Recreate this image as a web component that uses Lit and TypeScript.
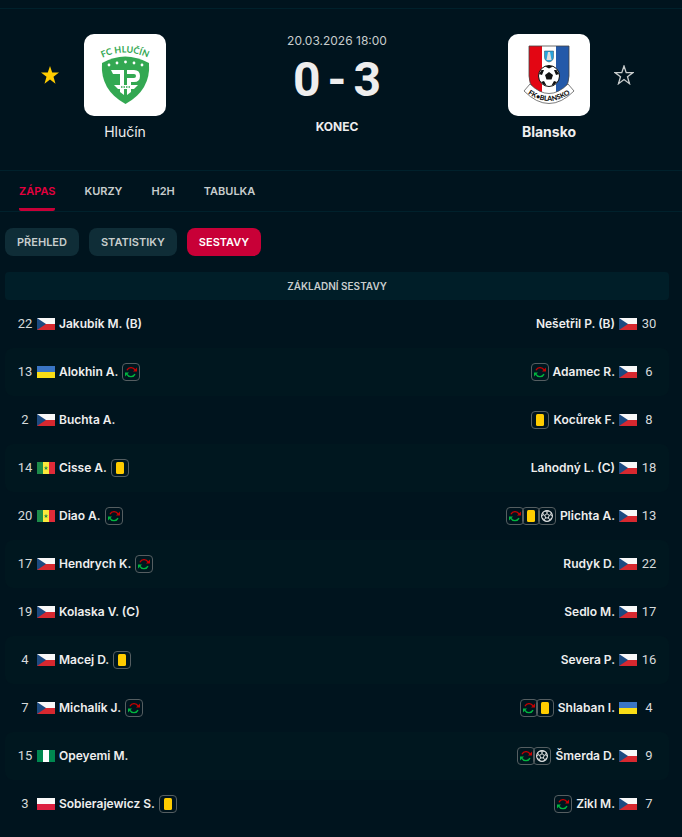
import { LitElement, html, svg, css, nothing } from "lit";
import { customElement, property } from "lit/decorators.js";

type Country = "cz" | "ua" | "sn" | "ng" | "pl";
type Incident = "sub" | "card" | "goal";
interface Player {
  no: number;
  name: string;
  country: Country;
  incidents?: Incident[];
}

const p = (no: number, name: string, country: Country, incidents: Incident[] = []): Player => ({ no, name, country, incidents });

const ROWS: [Player, Player][] = [
  [p(22, "Jakubík M. (B)", "cz"), p(30, "Nešetřil P. (B)", "cz")],
  [p(13, "Alokhin A.", "ua", ["sub"]), p(6, "Adamec R.", "cz", ["sub"])],
  [p(2, "Buchta A.", "cz"), p(8, "Kocůrek F.", "cz", ["card"])],
  [p(14, "Cisse A.", "sn", ["card"]), p(18, "Lahodný L. (C)", "cz")],
  [p(20, "Diao A.", "sn", ["sub"]), p(13, "Plichta A.", "cz", ["sub", "card", "goal"])],
  [p(17, "Hendrych K.", "cz", ["sub"]), p(22, "Rudyk D.", "cz")],
  [p(19, "Kolaska V. (C)", "cz"), p(17, "Sedlo M.", "cz")],
  [p(4, "Macej D.", "cz", ["card"]), p(16, "Severa P.", "cz")],
  [p(7, "Michalík J.", "cz", ["sub"]), p(4, "Shlaban I.", "ua", ["sub", "card"])],
  [p(15, "Opeyemi M.", "ng"), p(9, "Šmerda D.", "cz", ["sub", "goal"])],
  [p(3, "Sobierajewicz S.", "pl", ["card"]), p(7, "Zikl M.", "cz", ["sub"])],
];

const FLAGS = {
  cz: svg`<rect width="18" height="6" fill="#f8f8f8"/><rect y="6" width="18" height="6" fill="#d7282f"/><path d="M0 0L9 6L0 12Z" fill="#1c4a80"/>`,
  ua: svg`<rect width="18" height="6" fill="#3a75c4"/><rect y="6" width="18" height="6" fill="#f9dd16"/>`,
  sn: svg`<rect width="6" height="12" fill="#1e8c4a"/><rect x="6" width="6" height="12" fill="#fbea3c"/><rect x="12" width="6" height="12" fill="#e02b38"/><path d="M9 3.8l.6 1.6h1.6l-1.3 1 .5 1.6L9 7.1l-1.4.9.5-1.6-1.3-1h1.6z" fill="#1e8c4a"/>`,
  ng: svg`<rect width="18" height="12" fill="#008850"/><rect x="6" width="6" height="12" fill="#fff"/>`,
  pl: svg`<rect width="18" height="6" fill="#fafafa"/><rect y="6" width="18" height="6" fill="#dc1f40"/>`,
};

const STAR = "M10 1l2.200 6.600H19l-5.500 4.200 2 6.900L10 14.600l-5.500 4.100 2-6.900L1 7.600h6.800z";

const INCIDENTS = {
  sub: svg`<g fill="none" stroke-width="1.4">
      <path d="M2 4.200A4.500 4.500 0 0 1 10 3.900" stroke="#c80000"/>
      <path d="M10 8.100A4.500 4.500 0 0 1 2 8.300" stroke="#00b53f"/></g>
      <path d="M12 1.500V5.500H8z" fill="#c80000"/><path d="M0 10.500V6.500h4z" fill="#00b53f"/>`,
  card: svg`<rect x="2" width="8" height="12" rx="1.500" fill="#ffcd00"/>`,
  goal: svg`<circle cx="6" cy="6" r="5.400" fill="none" stroke="#e8eaea" stroke-width="1.100"/>
      <path d="M6 3.700L8.200 5.300 7.400 7.900H4.600L3.800 5.300Z" fill="none" stroke="#e8eaea"/>
      <path d="M6 3.700V2M8.200 5.300L10 4.700M7.400 7.900L8.600 9.600M4.600 7.900L3.400 9.600M3.800 5.300L2 4.700" stroke="#e8eaea"/>
      <path d="M4 .9L6 2 8 .9M11.300 6.200L10 4.700 10.100 2.600M10.700 8.500L8.600 9.600 7.600 11.300M1.300 8.500L3.400 9.600 4.400 11.300M.7 6.200L2 4.700 1.900 2.600" fill="none" stroke="#e8eaea" stroke-width=".9"/>`,
};

@customElement("player-cell")
class PlayerCell extends LitElement {
  @property({ attribute: false }) player!: Player;
  @property({ type: Boolean, reflect: true }) away = false;

  static styles = css`
    :host { display: flex; align-items: center; min-width: 0; height: 48px; font-size: 12px; line-height: 16px; color: #eeeeee; }
    :host([away]) { flex-direction: row-reverse; }
    .no { width: 24px; text-align: center; font: 400 13px/16px Roboto, sans-serif; color: #d6dadb; }
    .flag { width: 18px; height: 12px; margin-inline-end: 4px; flex: none; display: block; }
    :host([away]) .flag { margin-inline: 4px 0; }
    .name { font-weight: 600; white-space: nowrap; }
    .incidents { display: flex; margin: 0 4px; }
    .incident { box-sizing: border-box; width: 18px; height: 18px; border: 1px solid #555e61; border-radius: 4px; padding: 2px; }
    .incident + .incident { margin-left: -2px; }
    .incident svg { display: block; width: 12px; height: 12px; }
  `;

  render() {
    const { no, name, country, incidents } = this.player;
    return html`
      <span class="no">${no}</span>
      <svg class="flag" viewBox="0 0 18 12" aria-hidden="true">${FLAGS[country]}</svg>
      <span class="name">${name}</span>
      ${incidents?.length
        ? html`<span class="incidents">${incidents.map(
            (i) => html`<span class="incident"><svg viewBox="0 0 12 12" aria-hidden="true">${INCIDENTS[i]}</svg></span>`
          )}</span>`
        : nothing}
    `;
  }
}

@customElement("app-root")
class AppRoot extends LitElement {
  static styles = css`
    :host { display: block; min-height: 100vh; background: #00141e; font-family: Inter, "Noto Sans", sans-serif; color: #eeeeee; }
    * { box-sizing: border-box; }
    .page { padding-top: 8px; }
    .header { display: grid; grid-template-columns: 1fr 294px 1fr; border-top: 1px solid #00212c; height: 162px; padding: 25px 8px 0 0; }
    .side { display: flex; justify-content: flex-end; align-items: flex-start; }
    .side.away { flex-direction: row-reverse; }
    .fav { border: 0; padding: 0; background: none; width: 20px; height: 20px; margin-top: 31px; }
    .fav svg { display: block; width: 20px; height: 20px; }
    .team { display: flex; flex-direction: column; align-items: center; width: 130px; color: #eeeeee; text-decoration: none; gap: 6px; }
    .logo { display: block; width: 82px; height: 82px; border-radius: 10px; background: #fff; }
    .team-name { font-size: 14px; line-height: 20px; }
    .home .team-name { font-weight: 400; }
    .away .team-name { font-weight: 700; }
    .info { display: flex; flex-direction: column; align-items: center; }
    .date { font-size: 12px; line-height: 14px; color: #c8cdcd; }
    .score { display: flex; align-items: center; gap: 7px; font: 700 48px/64px Roboto, sans-serif; }
    .state { font-size: 12px; line-height: 16px; font-weight: 700; margin-top: 7px; }
    .tabs { display: flex; gap: 29px; height: 42px; padding: 0 19px; border: 1px solid #00212c; border-width: 1px 0; }
    .tab { font-size: 11px; line-height: 40px; font-weight: 600; color: #c8cdcd; text-decoration: none; }
    .tab.active { color: #e4003f; border-bottom: 3px solid #c80037; border-radius: 2px; }
    .pills { display: flex; gap: 10px; padding: 16px 5px; }
    .pill { height: 28px; border: 0; border-radius: 8px; padding: 0 12px; background: #0f2d37; color: #c8cdcd; font: 600 11px/28px Inter, sans-serif; }
    .pill.active { background: #c80037; color: #fff; }
    .lineups { padding: 0 13px 0 5px; }
    .title { margin: 0; height: 28px; border-radius: 4px; background: #001e28; color: #c8cdcd; text-align: center; font-size: 10px; line-height: 28px; font-weight: 600; }
    .row { display: grid; grid-template-columns: 1fr 1fr; padding: 0 8px; border-radius: 8px; }
    .row:nth-child(odd) { background: #00171f; }
  `;

  star(filled: boolean) {
    return html`<svg viewBox="0 0 20 20" aria-hidden="true"><path d=${STAR} fill=${filled ? "#ffcd00" : "none"} stroke=${filled ? "none" : "#c8cdcd"} stroke-width="1.3"/></svg>`;
  }

  hlucin() {
    return html`<svg class="logo" viewBox="0 0 82 82" role="img" aria-label="Hlučín">
      <defs><path id="arc-h" d="M16 25Q41 12 66 25"/></defs>
      <text font-family="Lato, sans-serif" font-weight="700" font-size="9" fill="#33a852" text-anchor="middle"><textPath href="#arc-h" startOffset="50%">FC HLUČÍN</textPath></text>
      <path d="M18 29Q41 16 65 29Q67 56 41.500 70Q16 56 18 29Z" fill="#33a852"/>
      <g fill="#fff"><circle cx="25" cy="31" r="1.400"/><circle cx="33" cy="29" r="1.400"/><circle cx="41.500" cy="28" r="1.400"/><circle cx="50" cy="29" r="1.400"/><circle cx="58" cy="31" r="1.400"/>
      <path d="M27 36H40V61L36 58V40H29ZM43 36H50Q56 36 56 42T50 48H47V58L43 61V44H50Q52 44 52 42T50 40H43Z"/>
      <path d="M30 51H54L50 55H34Z"/></g>
      <path d="M37 53h9" stroke="#33a852" stroke-width="1.500" stroke-dasharray="1.500 1"/>
    </svg>`;
  }

  blansko() {
    return html`<svg class="logo" viewBox="0 0 82 82" role="img" aria-label="Blansko">
      <defs><clipPath id="shield"><path d="M21 12H61V42Q61 58 41 63Q21 58 21 42Z"/></clipPath><path id="arc-b" d="M15 56Q41 78 67 56"/></defs>
      <g clip-path="url(#shield)"><path d="M21 12H34V65H21Z" fill="#e30613"/><path d="M34 12H48V65H34Z" fill="#fff"/><path d="M48 12H61V65H48Z" fill="#2459a9"/></g>
      <path d="M21 12H61V42Q61 58 41 63Q21 58 21 42Z" fill="none" stroke="#444" stroke-width=".8"/>
      <path d="M36.500 17H45.500V23Q45.500 27 41 28Q36.500 27 36.500 23Z" fill="#29a3dc" stroke="#345" stroke-width=".5"/><path d="M40 18H42L43.500 26H38.500Z" fill="#ddd"/>
      <path d="M22 50Q41 69 60 50L66 57Q41 82 16 57Z" fill="#fff" stroke="#444" stroke-width=".7"/>
      <circle cx="41" cy="42" r="10.500" fill="#fff" stroke="#111" stroke-width="1"/>
      <path d="M41 38L45 41 43.500 45.500H38.500L37 41ZM37 32.500L41 34.500 45 32.500Q41 31 37 32.500ZM31 40L33.500 36 36 36 34 41ZM51 40L48.500 36 46 36 48 41ZM33 48L36 47 38.500 51.500 35.500 50.500ZM49 48L46 47 43.500 51.500 46.500 50.500Z" fill="#111"/>
      <text font-family="Lato, sans-serif" font-weight="900" font-size="7" fill="#111" text-anchor="middle"><textPath href="#arc-b" startOffset="50%">FK•BLANSKO</textPath></text>
    </svg>`;
  }

  render() {
    return html`<main class="page">
      <header class="header">
        <div class="side home">
          <button class="fav" aria-label="Hlučín">${this.star(true)}</button>
          <a class="team" href="#hlucin">${this.hlucin()}<span class="team-name">Hlučín</span></a>
        </div>
        <div class="info">
          <div class="date">20.03.2026 18:00</div>
          <div class="score"><span>0</span><span>-</span><span>3</span></div>
          <div class="state">KONEC</div>
        </div>
        <div class="side away">
          <button class="fav" aria-label="Blansko">${this.star(false)}</button>
          <a class="team" href="#blansko">${this.blansko()}<span class="team-name">Blansko</span></a>
        </div>
      </header>
      <nav class="tabs">
        ${["ZÁPAS", "KURZY", "H2H", "TABULKA"].map((t, i) => html`<a class="tab ${i === 0 ? "active" : ""}" href="#${t}">${t}</a>`)}
      </nav>
      <div class="pills">
        ${["PŘEHLED", "STATISTIKY", "SESTAVY"].map((t, i) => html`<button class="pill ${i === 2 ? "active" : ""}">${t}</button>`)}
      </div>
      <section class="lineups">
        <h2 class="title">ZÁKLADNÍ SESTAVY</h2>
        ${ROWS.map(([h, a]) => html`<div class="row"><player-cell .player=${h}></player-cell><player-cell away .player=${a}></player-cell></div>`)}
      </section>
    </main>`;
  }
}
